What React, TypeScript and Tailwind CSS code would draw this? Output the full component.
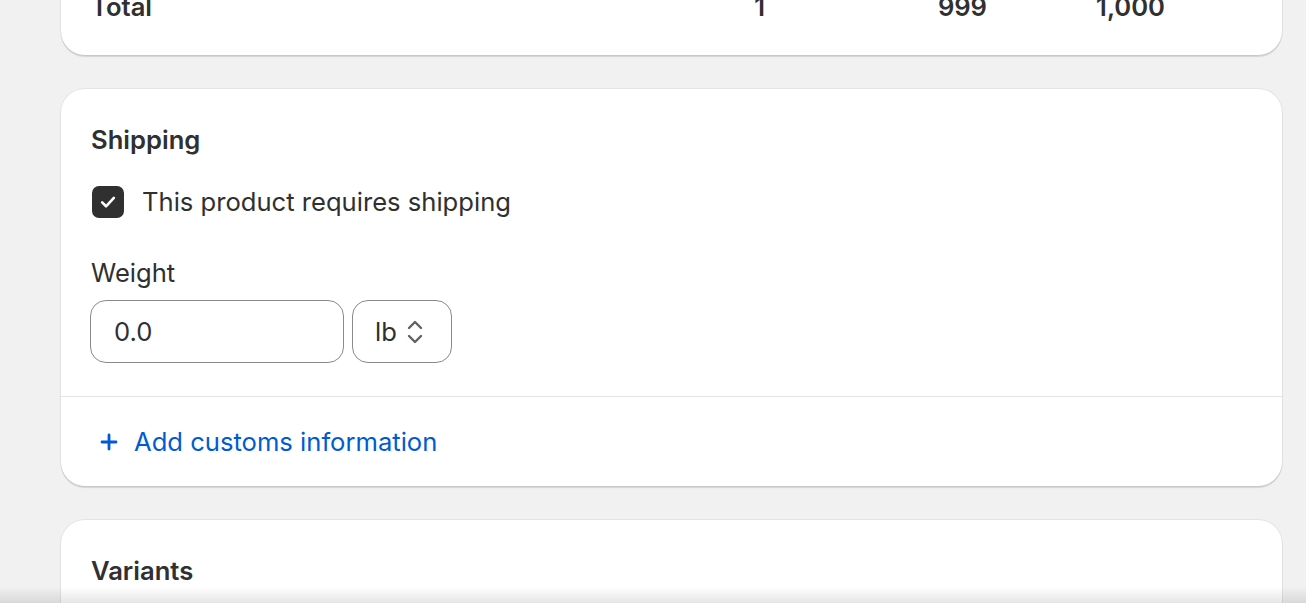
import { useState } from "react";

function Card({ children, className = "" }: { children: React.ReactNode; className?: string }) {
  return (
    <div
      className={
        "bg-white rounded-[24px] shadow-[0_0_0_1px_rgba(0,0,0,0.05),0_2px_1px_rgba(0,0,0,0.12)] overflow-hidden " +
        className
      }
    >
      {children}
    </div>
  );
}

export default function App() {
  const [requiresShipping, setRequiresShipping] = useState(true);

  return (
    <div
      className="min-h-screen bg-[#f1f1f1] pl-[61px] pr-[24px] overflow-hidden text-[#303030] text-[25.6px] leading-[32px]"
      style={{ fontFamily: "Inter, 'Noto Sans', sans-serif" }}
    >
      <div className="flex flex-col gap-[34px] -mt-[41px]">
        <Card>
          <div className="flex items-center px-[30px] pt-[32px] pb-[32px] font-semibold">
            <div className="flex-1">Total</div>
            <div className="w-[100px] text-right">1</div>
            <div className="w-[222px] text-right">999</div>
            <div className="w-[178px] text-right">1,000</div>
            <div className="w-[87px]" />
          </div>
        </Card>

        <Card>
          <div className="pl-[29px] pr-[30px] pt-[35px] pb-[33px]">
            <h2 className="font-semibold pl-[1px]">Shipping</h2>
            <label className="flex items-center gap-[18px] mt-[30px] cursor-pointer">
              <button
                type="button"
                onClick={() => setRequiresShipping(!requiresShipping)}
                className="w-[32px] h-[32px] ml-[2px] rounded-[7px] bg-[#303030] flex items-center justify-center"
              >
                {requiresShipping && (
                  <svg width="26" height="26" viewBox="0 0 20 20" fill="none">
                    <path
                      d="M5.5 10.3l3 3 6-6.4"
                      stroke="white"
                      strokeWidth="2"
                      strokeLinecap="round"
                      strokeLinejoin="round"
                    />
                  </svg>
                )}
              </button>
              <span>This product requires shipping</span>
            </label>

            <div className="mt-[39px] pl-[1px]">Weight</div>
            <div className="flex gap-[8px] mt-[11px]">
              <div className="w-[254px] h-[63px] rounded-[16px] border border-[#8a8a8a] flex items-center px-[23px]">
                0.0
              </div>
              <div className="w-[100px] h-[63px] rounded-[16px] border border-[#8a8a8a] flex items-center pl-[22px] gap-[8px]">
                <span>lb</span>
                <svg width="20" height="28" viewBox="0 0 20 28" fill="none">
                  <path d="M4 10l6-6 6 6" stroke="#616161" strokeWidth="2.4" strokeLinecap="round" strokeLinejoin="round" />
                  <path d="M4 18l6 6 6-6" stroke="#616161" strokeWidth="2.4" strokeLinecap="round" strokeLinejoin="round" />
                </svg>
              </div>
            </div>
          </div>
          <div className="border-t border-[#e3e3e3] h-[90px] flex items-center px-[39px] text-[#005bd3] gap-[16px]">
            <svg width="18" height="18" viewBox="0 0 18 18" fill="none">
              <path d="M9 2v14M2 9h14" stroke="#005bd3" strokeWidth="2.8" strokeLinecap="round" />
            </svg>
            <span>Add customs information</span>
          </div>
        </Card>

        <Card className="h-[200px]">
          <div className="px-[30px] pt-[35px]">
            <h2 className="font-semibold">Variants</h2>
          </div>
        </Card>
      </div>

      <div className="fixed left-0 right-0 bottom-0 h-[16px] bg-gradient-to-t from-black/10 to-transparent pointer-events-none" />
    </div>
  );
}
